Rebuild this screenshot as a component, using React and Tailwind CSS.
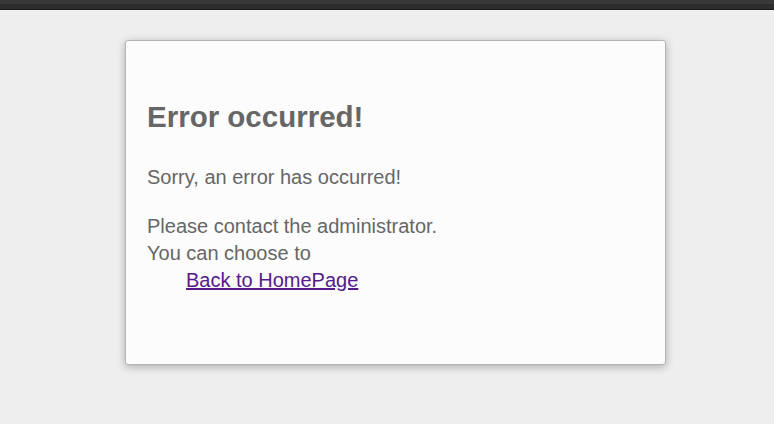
export default function App() {
  return (
    <div className="min-h-[424px] w-full bg-[#eeeeee] font-['Liberation_Sans',Arial,sans-serif]">
      <div className="h-[10px] w-full flex flex-col">
        <div className="h-[4px] bg-[#383838]" />
        <div className="h-[5px] bg-[#2c2c2c]" />
        <div className="h-[1px] bg-[#1c1c1c]" />
      </div>
      <div className="pt-[30px] pl-[125px]">
        <div className="w-[541px] h-[325px] bg-[#fcfcfc] border border-[#b4b4b4] rounded-[3px] shadow-[0_2px_9px_rgba(0,0,0,0.28)] pl-[21px] pt-[59px] text-[#666666]">
          <h1 className="text-[29.5px] leading-[34px] font-bold">Error occurred!</h1>
          <p className="mt-[30px] text-[20px] leading-[27px]">Sorry, an error has occurred!</p>
          <p className="mt-[22px] text-[20px] leading-[27px]">Please contact the administrator.</p>
          <p className="text-[20px] leading-[27px]">You can choose to</p>
          <div className="ml-[39px] text-[20px] leading-[27px]">
            <a href="#" className="text-[#551a8b] underline">Back to HomePage</a>
          </div>
        </div>
      </div>
    </div>
  );
}
